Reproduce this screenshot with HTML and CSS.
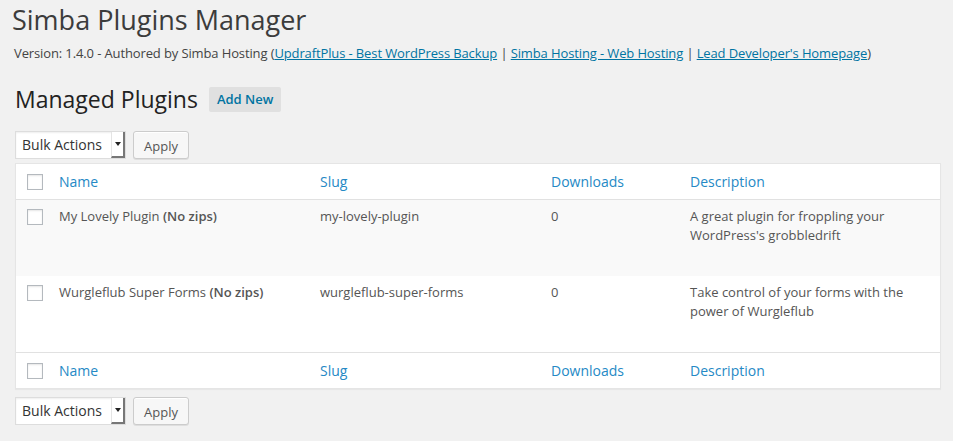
FILE: index.html
```html
<!DOCTYPE html>
<html>
<head>
<meta charset="utf-8">
<link rel="stylesheet" href="styles.css">
</head>
<body>
<div class="wrap">
  <h1 class="page-title">Simba Plugins Manager</h1>
  <p class="byline">Version: 1.4.0 - Authored by Simba Hosting (<a href="#">UpdraftPlus - Best WordPress Backup</a> | <a href="#">Simba Hosting - Web Hosting</a> | <a href="#">Lead Developer's Homepage</a>)</p>
  <div class="section-head">
    <h2 class="section-title">Managed Plugins</h2>
    <a class="add-new" href="#">Add New</a>
  </div>
  <div class="tablenav">
    <div class="select"><span class="select-label">Bulk Actions</span><span class="select-arrow"></span></div>
    <button class="button">Apply</button>
  </div>
  <table class="list">
    <colgroup>
      <col class="c-cb"><col class="c-name"><col class="c-slug"><col class="c-dl"><col class="c-desc">
    </colgroup>
    <thead>
      <tr>
        <th class="cb"><span class="checkbox"></span></th>
        <th><a href="#">Name</a></th>
        <th><a href="#">Slug</a></th>
        <th><a href="#">Downloads</a></th>
        <th><a href="#">Description</a></th>
      </tr>
    </thead>
    <tbody>
      <tr class="alt">
        <td class="cb"><span class="checkbox"></span></td>
        <td>My Lovely Plugin <strong>(No zips)</strong></td>
        <td>my-lovely-plugin</td>
        <td>0</td>
        <td>A great plugin for froppling your WordPress's grobbledrift</td>
      </tr>
      <tr>
        <td class="cb"><span class="checkbox"></span></td>
        <td>Wurgleflub Super Forms <strong>(No zips)</strong></td>
        <td>wurgleflub-super-forms</td>
        <td>0</td>
        <td>Take control of your forms with the power of Wurgleflub</td>
      </tr>
    </tbody>
    <tfoot>
      <tr>
        <th class="cb"><span class="checkbox"></span></th>
        <th><a href="#">Name</a></th>
        <th><a href="#">Slug</a></th>
        <th><a href="#">Downloads</a></th>
        <th><a href="#">Description</a></th>
      </tr>
    </tfoot>
  </table>
  <div class="tablenav bottom">
    <div class="select"><span class="select-label">Bulk Actions</span><span class="select-arrow"></span></div>
    <button class="button">Apply</button>
  </div>
</div>
</body>
</html>
```

FILE: styles.css
```css
html, body {
  margin: 0;
  padding: 0;
  background: #f1f1f1;
}
body {
  font-family: "Open Sans", "Noto Sans", sans-serif;
  font-size: 13px;
  line-height: 1.4em;
  color: #444;
}
.wrap {
  padding: 0 12px 0 15px;
}
a {
  color: #0074a2;
}
.page-title {
  margin: 0 0 0 -3px;
  padding: 3px 0 0;
  font-size: 27px;
  line-height: 34px;
  font-weight: 400;
  color: #3c3c3c;
}
.byline {
  margin: 7px 0 0 -1px;
  font-size: 13px;
  line-height: 19px;
  letter-spacing: -0.12px;
  color: #444;
}
.section-head {
  display: flex;
  align-items: center;
  gap: 11px;
  margin-top: 22px;
  height: 29px;
}
.section-title {
  margin: 0;
  font-size: 23px;
  line-height: 29px;
  font-weight: 400;
  color: #222;
}
.add-new {
  display: inline-block;
  background: #e0e0e0;
  color: #0074a2;
  text-decoration: none;
  font-weight: 600;
  font-size: 13px;
  line-height: 25px;
  height: 25px;
  padding: 0 8px;
  border-radius: 2px;
}
.tablenav {
  display: flex;
  gap: 7px;
  margin-top: 17px;
  height: 28px;
  margin-bottom: 4px;
}
.tablenav.bottom {
  margin-top: 8px;
}
.select {
  width: 109px;
  height: 26px;
  background: #fff;
  border: 1px solid #ddd;
  display: flex;
  align-items: center;
  position: relative;
  box-shadow: inset 0 1px 2px rgba(0,0,0,.07);
}
.select-label {
  font-size: 14px;
  color: #333;
  padding-left: 6px;
  flex: 1;
}
.select-arrow {
  width: 14px;
  height: 26px;
  border-left: 1px solid #e4e4e4;
  border-right: 2px solid #777;
  border-bottom: 2px solid #777;
  box-sizing: border-box;
  align-self: flex-start;
  position: relative;
  background: #fff;
}
.select-arrow::after {
  content: "";
  position: absolute;
  left: 3px;
  top: 10px;
  border-left: 3.5px solid transparent;
  border-right: 3.5px solid transparent;
  border-top: 4px solid #222;
}
.button {
  height: 28px;
  padding: 0 10px;
  border: 1px solid #ccc;
  border-radius: 3px;
  background: #f7f7f7;
  color: #555;
  font-family: inherit;
  font-size: 13px;
  line-height: 28px;
  box-shadow: inset 0 1px 0 #fff, 0 1px 0 rgba(0,0,0,.08);
  width: 56px;
}
.list {
  width: 926px;
  border-collapse: separate;
  border-spacing: 0;
  background: #fff;
  border: 1px solid #e5e5e5;
  box-shadow: 0 1px 1px rgba(0,0,0,.04);
  table-layout: fixed;
}
.c-cb { width: 33px; }
.c-name { width: 261px; }
.c-slug { width: 231px; }
.c-dl { width: 139px; }
.c-desc { width: 260px; }
th, td {
  text-align: left;
  vertical-align: top;
  padding: 8px 10px;
}
th {
  font-size: 14px;
  font-weight: 400;
  line-height: 19px;
  height: 19px;
}
th a {
  color: #2589c5;
  text-decoration: none;
}
thead th {
  border-bottom: 1px solid #e1e1e1;
}
tfoot th {
  border-top: 1px solid #e1e1e1;
}
td {
  height: 61px;
  line-height: 19px;
  color: #555;
  padding-top: 7px;
}
td strong {
  font-weight: 600;
}
tr.alt td {
  background: #f9f9f9;
}
th.cb, td.cb {
  padding: 10px 0 0 11px;
}
td.cb {
  padding-top: 9px;
}
.checkbox {
  display: block;
  width: 16px;
  height: 16px;
  box-sizing: border-box;
  border: 1px solid #b4b9be;
  background: #fff;
  box-shadow: inset 0 1px 2px rgba(0,0,0,.1);
}
```
